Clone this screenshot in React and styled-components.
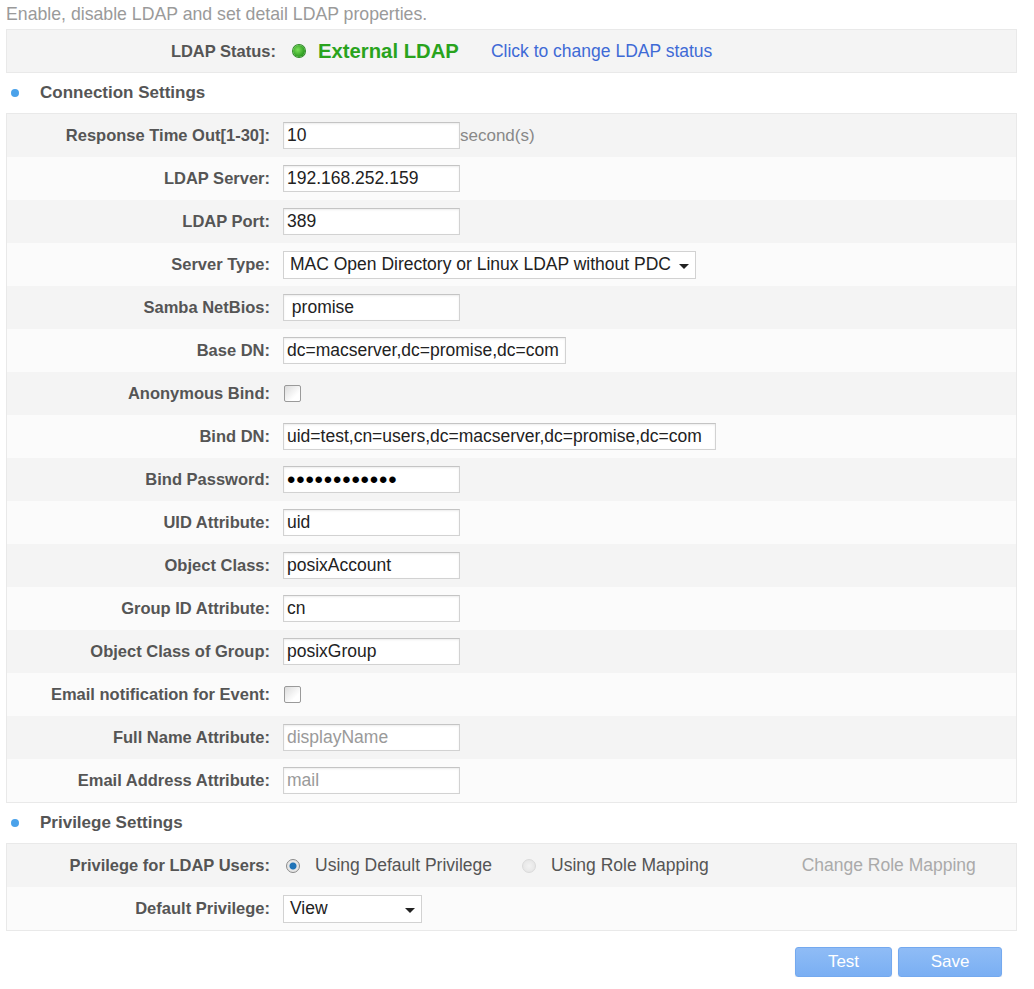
import React from "react";
import styled, { createGlobalStyle } from "styled-components";

const Global = createGlobalStyle`
  body {
    margin: 0;
    background: #fff;
    font-family: "Liberation Sans", Arial, sans-serif;
  }
`;

const Page = styled.div`
  width: 1011px;
  padding: 0 0 0 6px;
`;

const Intro = styled.div`
  height: 29px;
  line-height: 28px;
  font-size: 17.7px;
  color: #9a9a9a;
  white-space: nowrap;
`;

const Panel = styled.div`
  border: 1px solid #e9e9e9;
  background: #fbfbfb;
`;

const Row = styled.div`
  display: grid;
  grid-template-columns: 263px 1fr;
  column-gap: 13px;
  align-items: center;
  height: ${(p) => p.$h || 43}px;
  background: ${(p) => (p.$alt ? "#fbfbfb" : "#f4f4f4")};
`;

const Label = styled.div`
  text-align: right;
  font-size: 16.5px;
  font-weight: bold;
  color: #555;
  white-space: nowrap;
`;

const Field = styled.div`
  display: flex;
  align-items: center;
`;

const Input = styled.input`
  box-sizing: border-box;
  width: ${(p) => p.$w || 177}px;
  height: 27px;
  border: 1px solid #d2d2d2;
  border-top-color: #c4c4c4;
  box-shadow: inset 0 1px 2px rgba(0, 0, 0, 0.08);
  background: #fff;
  padding: 0 3px;
  font-family: "Liberation Sans", Arial, sans-serif;
  font-size: 17.5px;
  color: ${(p) => (p.$muted ? "#9a9a9a" : "#222")};
  outline: none;
  &[type="password"] {
    font-size: 24px;
    letter-spacing: 0.8px;
    color: #000;
  }
`;

const Unit = styled.span`
  font-size: 17px;
  color: #888;
`;

const Select = styled.div`
  box-sizing: border-box;
  width: ${(p) => p.$w}px;
  height: 28px;
  border: 1px solid #d2d2d2;
  background: #fff;
  display: flex;
  align-items: center;
  justify-content: space-between;
  padding: 0 6px;
  font-size: 17.5px;
  color: #222;
  white-space: nowrap;
`;

const Caret = styled.span`
  width: 0;
  height: 0;
  border-left: 5px solid transparent;
  border-right: 5px solid transparent;
  border-top: 5px solid #222;
  margin-top: 3px;
`;

const Check = styled.span`
  width: 15px;
  height: 15px;
  border: 1px solid #9a9a9a;
  border-radius: 2px;
  background: linear-gradient(135deg, #dcdcdc, #fff 70%);
  margin-left: 1px;
`;

const StatusRow = styled.div`
  display: flex;
  align-items: center;
  height: 42px;
  background: #f4f4f4;
`;

const StatusLabel = styled(Label)`
  width: 269px;
`;

const Dot = styled.span`
  width: 12px;
  height: 12px;
  border-radius: 50%;
  margin: 0 13px 0 17px;
  background: radial-gradient(circle at 40% 40%, #7be05a, #2a9a1e 70%);
  box-shadow: 0 0 0 1px #2d8a24;
`;

const StatusValue = styled.span`
  font-size: 20.3px;
  font-weight: bold;
  color: #29a31d;
  margin-right: 32px;
`;

const Link = styled.a`
  font-size: 17.5px;
  color: #3e6ad6;
  text-decoration: none;
  cursor: pointer;
`;

const Section = styled.div`
  display: flex;
  align-items: center;
  height: 40px;
  font-size: 17px;
  font-weight: bold;
  color: #555;
  &::before {
    content: "";
    width: 8px;
    height: 8px;
    border-radius: 50%;
    background: #4aa2ea;
    margin: 0 21px 0 5px;
  }
`;

const Radio = styled.span`
  width: 14px;
  height: 14px;
  border-radius: 50%;
  box-sizing: border-box;
  border: 1px solid ${(p) => (p.$on ? "#8a8a8a" : "#dadada")};
  background: ${(p) =>
    p.$on
      ? "radial-gradient(circle, #1f73b7 0 3px, #e6e6e6 4px)"
      : "radial-gradient(circle, #f2f2f2, #e2e2e2)"};
  margin: 0 15px 0 ${(p) => p.$ml}px;
`;

const Option = styled.span`
  font-size: 17.5px;
  color: ${(p) => (p.$dim ? "#aaa" : "#555")};
  margin-left: ${(p) => p.$ml || 0}px;
  white-space: nowrap;
`;

const Buttons = styled.div`
  display: flex;
  justify-content: flex-end;
  gap: 6px;
  padding: 16px 15px 0 0;
`;

const Button = styled.button`
  width: ${(p) => p.$w}px;
  height: 30px;
  border: 1px solid #74a9ef;
  border-radius: 3px;
  background: linear-gradient(#8fbcf6, #7aaff3);
  color: #fff;
  font-family: "Liberation Sans", Arial, sans-serif;
  font-size: 17px;
  box-shadow: 0 1px 1px rgba(0, 0, 0, 0.12);
`;

const connection = [
  { label: "Response Time Out[1-30]:", value: "10", unit: "second(s)" },
  { label: "LDAP Server:", value: "192.168.252.159" },
  { label: "LDAP Port:", value: "389" },
  { label: "Server Type:", select: "MAC Open Directory or Linux LDAP without PDC", w: 413 },
  { label: "Samba NetBios:", value: " promise" },
  { label: "Base DN:", value: "dc=macserver,dc=promise,dc=com", w: 283 },
  { label: "Anonymous Bind:", check: true },
  { label: "Bind DN:", value: "uid=test,cn=users,dc=macserver,dc=promise,dc=com", w: 433 },
  { label: "Bind Password:", value: "abcdefghijkl", password: true },
  { label: "UID Attribute:", value: "uid" },
  { label: "Object Class:", value: "posixAccount" },
  { label: "Group ID Attribute:", value: "cn" },
  { label: "Object Class of Group:", value: "posixGroup" },
  { label: "Email notification for Event:", check: true },
  { label: "Full Name Attribute:", value: "displayName", muted: true },
  { label: "Email Address Attribute:", value: "mail", muted: true },
];

const renderField = (f) => {
  if (f.select)
    return (
      <Select $w={f.w}>
        {f.select}
        <Caret />
      </Select>
    );
  if (f.check) return <Check />;
  return (
    <>
      <Input
        type={f.password ? "password" : "text"}
        defaultValue={f.value}
        $w={f.w}
        $muted={f.muted}
        readOnly
      />
      {f.unit && <Unit>{f.unit}</Unit>}
    </>
  );
};

export default function App() {
  return (
    <Page>
      <Global />
      <Intro>Enable, disable LDAP and set detail LDAP properties.</Intro>
      <Panel>
        <StatusRow>
          <StatusLabel>LDAP Status:</StatusLabel>
          <Dot />
          <StatusValue>External LDAP</StatusValue>
          <Link>Click to change LDAP status</Link>
        </StatusRow>
      </Panel>

      <Section>Connection Settings</Section>
      <Panel>
        {connection.map((f, i) => (
          <Row key={f.label} $alt={i % 2 === 1}>
            <Label>{f.label}</Label>
            <Field>{renderField(f)}</Field>
          </Row>
        ))}
      </Panel>

      <Section>Privilege Settings</Section>
      <Panel>
        <Row>
          <Label>Privilege for LDAP Users:</Label>
          <Field>
            <Radio $on $ml={3} />
            <Option>Using Default Privilege</Option>
            <Radio $ml={30} />
            <Option>Using Role Mapping</Option>
            <Option $dim $ml={93}>
              Change Role Mapping
            </Option>
          </Field>
        </Row>
        <Row $alt>
          <Label>Default Privilege:</Label>
          <Field>
            <Select $w={139}>
              View
              <Caret />
            </Select>
          </Field>
        </Row>
      </Panel>

      <Buttons>
        <Button $w={97}>Test</Button>
        <Button $w={104}>Save</Button>
      </Buttons>
    </Page>
  );
}
